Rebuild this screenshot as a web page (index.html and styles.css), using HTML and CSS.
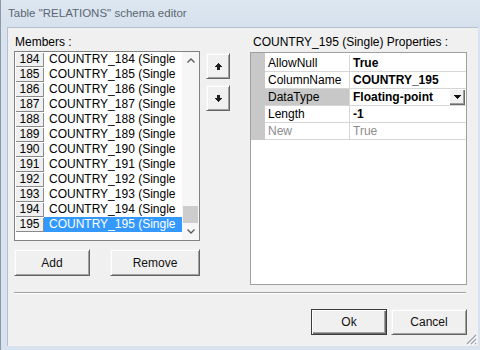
FILE: index.html
```html
<!DOCTYPE html>
<html>
<head>
<meta charset="utf-8">
<link rel="stylesheet" href="styles.css">
</head>
<body>
<div class="window">
  <div class="titlebar">Table "RELATIONS" schema editor</div>
  <div class="frame">
    <div class="client">
      <div class="top">
        <div class="col-left">
          <div class="label">Members :</div>
          <div class="listbox">
            <div class="rows">
              <div class="row"><span class="num">184</span><span class="item">COUNTRY_184 (Single</span></div>
              <div class="row"><span class="num">185</span><span class="item">COUNTRY_185 (Single</span></div>
              <div class="row"><span class="num">186</span><span class="item">COUNTRY_186 (Single</span></div>
              <div class="row"><span class="num">187</span><span class="item">COUNTRY_187 (Single</span></div>
              <div class="row"><span class="num">188</span><span class="item">COUNTRY_188 (Single</span></div>
              <div class="row"><span class="num">189</span><span class="item">COUNTRY_189 (Single</span></div>
              <div class="row"><span class="num">190</span><span class="item">COUNTRY_190 (Single</span></div>
              <div class="row"><span class="num">191</span><span class="item">COUNTRY_191 (Single</span></div>
              <div class="row"><span class="num">192</span><span class="item">COUNTRY_192 (Single</span></div>
              <div class="row"><span class="num">193</span><span class="item">COUNTRY_193 (Single</span></div>
              <div class="row"><span class="num">194</span><span class="item">COUNTRY_194 (Single</span></div>
              <div class="row selected"><span class="num">195</span><span class="item">COUNTRY_195 (Single</span></div>
            </div>
            <div class="vscroll">
              <div class="sb-btn"><svg width="8" height="5" viewBox="0 0 8 5"><polyline points="0.5,4.5 4,1 7.5,4.5" fill="none" stroke="#5a5a5a" stroke-width="1.3"/></svg></div>
              <div class="sb-track"><div class="sb-thumb"></div></div>
              <div class="sb-btn"><svg width="8" height="5" viewBox="0 0 8 5"><polyline points="0.5,0.5 4,4 7.5,0.5" fill="none" stroke="#5a5a5a" stroke-width="1.3"/></svg></div>
            </div>
          </div>
          <div class="list-buttons">
            <button class="btn btn-add">Add</button>
            <button class="btn btn-remove">Remove</button>
          </div>
        </div>
        <div class="col-arrows">
          <button class="btn arrow-btn"><svg width="7" height="7" viewBox="0 0 7 7"><path d="M3 0h1v1h1v1h1v1h1v1H5v3H2V4H0V3h1V2h1V1h1z" fill="#1e1e1e"/></svg></button>
          <button class="btn arrow-btn"><svg width="7" height="7" viewBox="0 0 7 7"><path d="M2 0h3v3h2v1H6v1H5v1H4v1H3V6H2V5H1V4H0V3h2z" fill="#1e1e1e"/></svg></button>
        </div>
        <div class="col-right">
          <div class="label label-right">COUNTRY_195 (Single) Properties :</div>
          <div class="pgrid">
            <div class="pg-rows">
              <div class="pg-row"><div class="pg-name">AllowNull</div><div class="pg-val">True</div></div>
              <div class="pg-row"><div class="pg-name">ColumnName</div><div class="pg-val">COUNTRY_195</div></div>
              <div class="pg-row pg-active"><div class="pg-name">DataType</div><div class="pg-val">Floating-point<span class="dd-btn"><svg width="7" height="4" viewBox="0 0 7 4"><path d="M0 0h7v1H6v1H5v1H4v1H3V3H2V2H1V1H0z" fill="#111"/></svg></span></div></div>
              <div class="pg-row"><div class="pg-name">Length</div><div class="pg-val">-1</div></div>
              <div class="pg-row pg-readonly"><div class="pg-name">New</div><div class="pg-val">True</div></div>
            </div>
          </div>
        </div>
      </div>
      <div class="separator"></div>
      <div class="dlg-buttons">
        <button class="btn btn-dlg btn-default">Ok</button>
        <button class="btn btn-dlg">Cancel</button>
      </div>
      <svg class="grip" width="13" height="13" viewBox="0 0 13 13">
        <path d="M12 3L3 12M12 7L7 12M12 11L11 12" stroke="#9aa3ad" stroke-width="1.2" fill="none"/>
        <path d="M13 4L4 13M13 8L8 13" stroke="#ffffff" stroke-width="1" fill="none"/>
      </svg>
    </div>
  </div>
</div>
</body>
</html>
```

FILE: styles.css
```css
* { box-sizing: border-box; }
html, body {
  margin: 0;
  padding: 0;
  width: 480px;
  height: 350px;
  overflow: hidden;
  background: #d9e3ef;
}
body {
  font-family: "Liberation Sans", Arial, sans-serif;
  font-size: 12px;
  color: #000;
}
.window {
  width: 480px;
  height: 350px;
  border-left: 1px solid #8c98a5;
  background: #d9e3ef;
}
.titlebar {
  height: 27px;
  line-height: 27px;
  padding-left: 7px;
  font-size: 11.5px;
  color: #5d6670;
  background: linear-gradient(#dde7f2, #d6e1ed);
  white-space: nowrap;
}
.frame {
  padding: 0 2px 4px 6px;
}
.client {
  position: relative;
  width: 471px;
  height: 319px;
  border-top: 1px solid #b4c0cd;
  border-left: 1px solid #b4c0cd;
  background: #f0f0f0;
}
.top {
  display: flex;
  align-items: flex-start;
  padding: 7px 0 0 6px;
}
.label {
  height: 14px;
  line-height: 14px;
  padding-left: 1px;
  white-space: nowrap;
}
.label-right { padding-left: 3px; margin-bottom: 3px; }
.col-left { width: 186px; }
.col-left .label { margin-bottom: 2px; }
.listbox {
  display: flex;
  width: 186px;
  height: 190px;
  border: 1px solid #828282;
  background: #fff;
}
.rows { width: 167px; }
.row {
  display: flex;
  height: 15px;
  line-height: 15px;
}
.num {
  width: 29px;
  text-align: center;
  background: #f0f0f0;
  box-shadow: inset 1px 1px #ffffff, inset -1px -1px #8a8a8a;
}
.item {
  width: 138px;
  padding-left: 5px;
  white-space: nowrap;
  overflow: hidden;
}
.selected .item {
  background: #3399ff;
  color: #fff;
}
.vscroll {
  width: 17px;
  display: flex;
  flex-direction: column;
  background: #f6f6f6;
}
.sb-btn {
  height: 17px;
  display: flex;
  align-items: center;
  justify-content: center;
}
.sb-track {
  flex: 1;
  display: flex;
  flex-direction: column;
  justify-content: flex-end;
  padding: 0 1px;
}
.sb-thumb {
  height: 17px;
  background: #cdcdcd;
}
.btn {
  font-family: "Liberation Sans", Arial, sans-serif;
  font-size: 12px;
  color: #111;
  padding: 0;
  margin: 0;
  background: #f0f0f0;
  border: 1px solid;
  border-color: #f4f4f4 #646464 #646464 #f4f4f4;
  box-shadow: inset 1px 1px #ffffff, inset -1px -1px #a0a0a0;
  display: flex;
  align-items: center;
  justify-content: center;
}
.list-buttons {
  display: flex;
  justify-content: space-between;
  margin-top: 8px;
}
.btn-add { width: 76px; height: 27px; }
.btn-remove { width: 90px; height: 27px; }
.col-arrows {
  display: flex;
  flex-direction: column;
  gap: 6px;
  margin: 18px 0 0 6px;
  width: 24px;
}
.arrow-btn { width: 24px; height: 26px; }
.arrow-btn svg { display: block; }
.col-right {
  width: 217px;
  margin-left: 20px;
}
.pgrid {
  width: 217px;
  height: 233px;
  border: 1px solid #a0a0a0;
  background: #fff;
}
.pg-rows {
  padding: 2px 0 0 14px;
  background: linear-gradient(to right, #c8c8c8 14px, #ffffff 14px);
}
.pg-row {
  display: flex;
  height: 17px;
}
.pg-name, .pg-val {
  height: 17px;
  line-height: 16px;
  border-bottom: 1px solid #d6d6d6;
  white-space: nowrap;
  overflow: hidden;
}
.pg-name {
  width: 85px;
  padding-left: 3px;
  border-right: 1px solid #d6d6d6;
}
.pg-val {
  flex: 1;
  display: flex;
  padding-left: 3px;
  font-weight: bold;
}
.pg-active .pg-name { background: #c8c8c8; }
.pg-readonly .pg-name, .pg-readonly .pg-val {
  color: #8d8d8d;
  font-weight: normal;
}
.dd-btn {
  margin-left: auto;
  margin-right: 1px;
  width: 16px;
  height: 16px;
  display: flex;
  align-items: center;
  justify-content: center;
  background: #f0f0f0;
  box-shadow: inset 1px 1px #ffffff, inset -1px -1px #696969, inset -2px -2px #a0a0a0;
}
.separator {
  width: 452px;
  height: 2px;
  margin: 7px 0 0 6px;
  border-top: 1px solid #a0a0a0;
  border-bottom: 1px solid #ffffff;
}
.dlg-buttons {
  display: flex;
  justify-content: flex-end;
  gap: 4px;
  margin-top: 15px;
  padding-right: 11px;
}
.btn-dlg { width: 76px; height: 26px; }
.btn-default {
  border: 1px solid #3c3c3c;
  box-shadow: inset 1px 1px #ffffff, inset -1px -1px #696969, inset -2px -2px #a0a0a0;
}
.grip {
  position: absolute;
  right: 1px;
  bottom: 1px;
}
```
